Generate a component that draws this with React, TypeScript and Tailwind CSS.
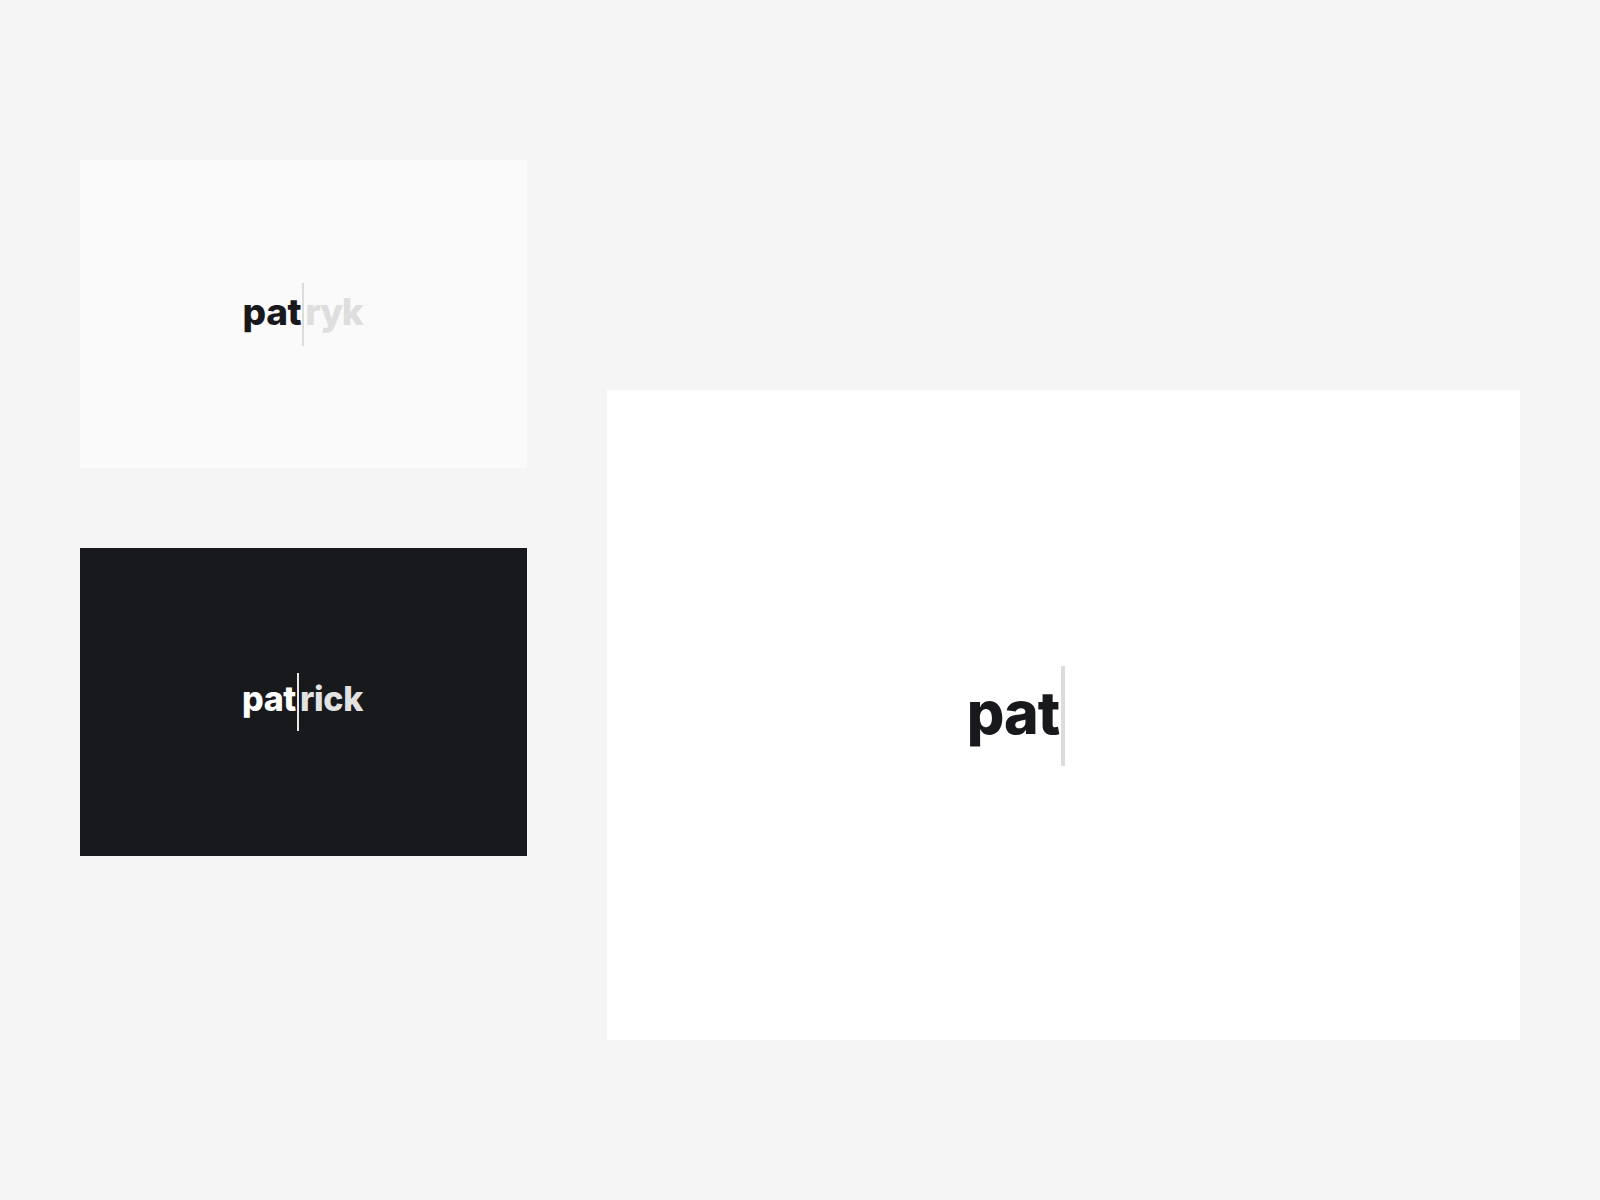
const fontStack = { fontFamily: "Inter, 'Liberation Sans', sans-serif" };

function Caret({ className }: { className: string }) {
  return <span className={`block shrink-0 ${className}`} />;
}

export default function App() {
  return (
    <div className="w-full h-[1200px] bg-[#f5f5f5] overflow-hidden" style={fontStack}>
      <div className="flex items-start pl-20 pt-40 gap-20">
        <div className="flex flex-col gap-20 w-[447px]">
          {/* light card */}
          <div className="h-[308px] bg-[#fafafa] flex items-center justify-center">
            <div className="flex items-center font-extrabold text-[37px] leading-none -translate-x-px">
              <span className="text-[#18191d] mb-[6px] tracking-[-0.01em]">pat</span>
              <Caret className="w-[2px] h-[63px] bg-[#dcdcdc] mx-px" />
              <span className="text-[#dedede] mb-[6px] tracking-[-0.035em]">ryk</span>
            </div>
          </div>

          {/* dark card */}
          <div className="h-[308px] bg-[#18191d] flex items-center justify-center">
            <div className="flex items-center font-extrabold text-[34px] leading-none -translate-x-px">
              <span className="text-white mb-[6px] tracking-[-0.01em]">pat</span>
              <Caret className="w-[2px] h-[58px] bg-[#e8e8e8] mx-px" />
              <span className="text-[#e2e2e2] mb-[6px] tracking-[-0.01em]">rick</span>
            </div>
          </div>
        </div>

        {/* big card */}
        <div className="mt-[230px] w-[913px] h-[650px] bg-white grid grid-cols-[1fr_auto_1fr] items-center">
          <span className="justify-self-end font-extrabold text-[59px] leading-none tracking-[-0.015em] text-[#18191d] mb-[5px] mr-[2px]">
            pat
          </span>
          <Caret className="w-1 h-[100px] bg-[#dcdcdc] -translate-x-px translate-y-px" />
          <span />
        </div>
      </div>
    </div>
  );
}
